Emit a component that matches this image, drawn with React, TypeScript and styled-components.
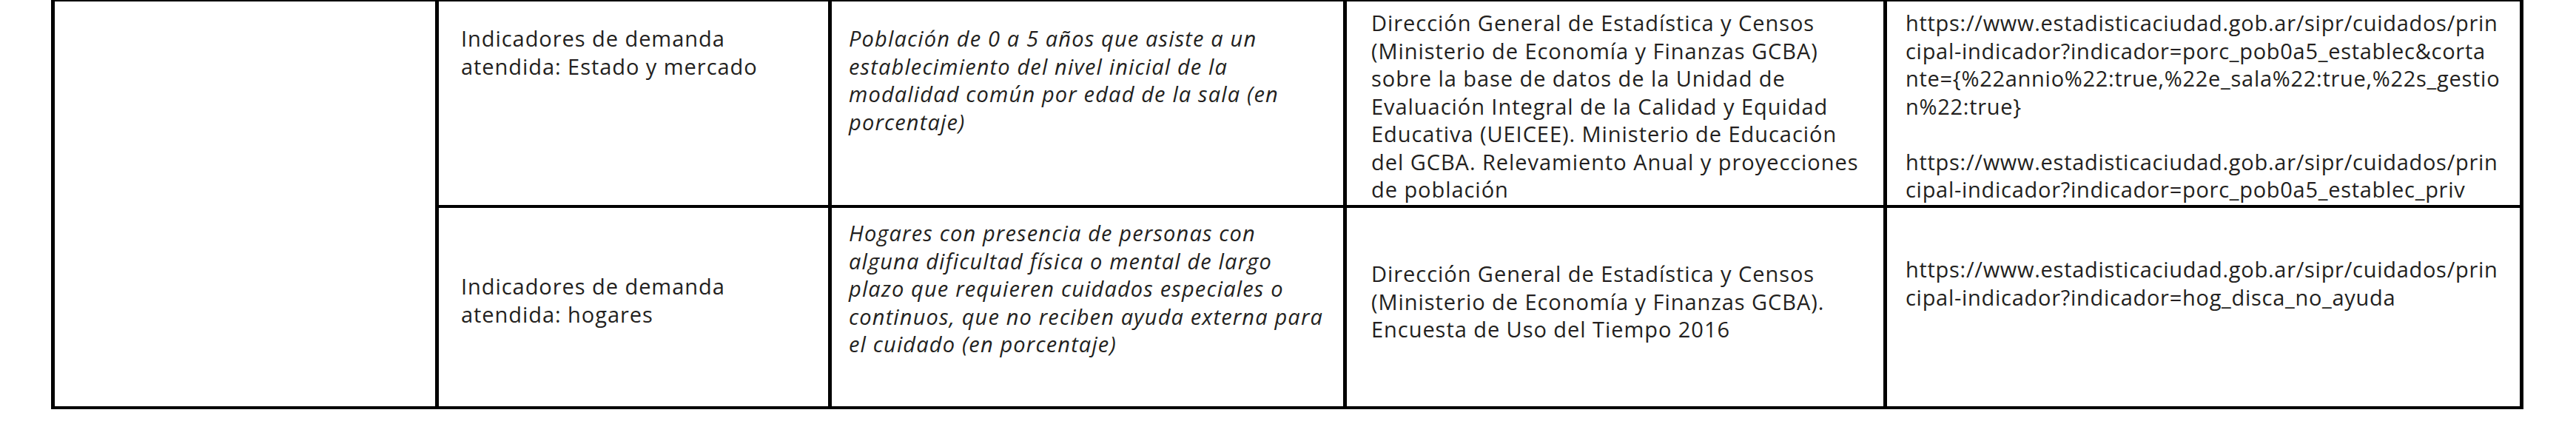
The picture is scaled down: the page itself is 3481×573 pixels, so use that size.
import React from "react";
import styled, { createGlobalStyle } from "styled-components";

const GlobalStyle = createGlobalStyle`
    html,
    body {
        margin: 0;
        padding: 0;
        background: #fff;
    }

    body {
        width: 3481px;
        height: 573px;
        overflow: hidden;
    }
`;

const Table = styled.table`
    margin: -2px 0 0 69px;
    width: 3341px;
    table-layout: fixed;
    border-collapse: separate;
    border-spacing: 0;
    border-top: 4px solid #000;
    border-left: 5px solid #000;
    font-family: "Open Sans", "Liberation Sans", sans-serif;
    font-size: 29px;
    line-height: 37.5px;
    color: #231f20;
`;

const Row = styled.tr<{ $height: number }>`
    height: ${({ $height }) => $height}px;
`;

const Cell = styled.td<{ $top?: number; $left?: number; $italic?: boolean; $tracking?: number }>`
    padding: ${({ $top = 0 }) => $top}px 0 0 ${({ $left = 0 }) => $left}px;
    vertical-align: top;
    border-right: 5px solid #000;
    border-bottom: 4px solid #000;
    font-style: ${({ $italic }) => ($italic ? "italic" : "normal")};
    letter-spacing: ${({ $tracking = 0 }) => $tracking}px;
    overflow: hidden;
`;

const Line = styled.span`
    display: block;
    white-space: pre;
`;

interface Entry {
    height: number;
    indicator: string[];
    description: string[];
    source: string[];
    links: string[];
    offsets: [number, number, number, number];
}

const COLUMNS = [519, 531, 696, 730, 860];
const INSETS = [30, 23, 33, 25];

const ENTRIES: Entry[] = [
    {
        height: 279,
        indicator: ["Indicadores de demanda", "atendida: Estado y mercado"],
        description: [
            "Población de 0 a 5 años que asiste a un",
            "establecimiento del nivel inicial de la",
            "modalidad común por edad de la sala (en",
            "porcentaje)",
        ],
        source: [
            "Dirección General de Estadística y Censos",
            "(Ministerio de Economía y Finanzas GCBA)",
            "sobre la base de datos de la Unidad de",
            "Evaluación Integral de la Calidad y Equidad",
            "Educativa (UEICEE). Ministerio de Educación",
            "del GCBA. Relevamiento Anual y proyecciones",
            "de población",
        ],
        links: [
            "https://www.estadisticaciudad.gob.ar/sipr/cuidados/prin",
            "cipal-indicador?indicador=porc_pob0a5_establec&corta",
            "nte={%22annio%22:true,%22e_sala%22:true,%22s_gestio",
            "n%22:true}",
            " ",
            "https://www.estadisticaciudad.gob.ar/sipr/cuidados/prin",
            "cipal-indicador?indicador=porc_pob0a5_establec_priv",
        ],
        offsets: [31, 31, 10, 10],
    },
    {
        height: 272,
        indicator: ["Indicadores de demanda", "atendida: hogares"],
        description: [
            "Hogares con presencia de personas con",
            "alguna dificultad física o mental de largo",
            "plazo que requieren cuidados especiales o",
            "continuos, que no reciben ayuda externa para",
            "el cuidado (en porcentaje)",
        ],
        source: [
            "Dirección General de Estadística y Censos",
            "(Ministerio de Economía y Finanzas GCBA).",
            "Encuesta de Uso del Tiempo 2016",
        ],
        links: [
            "https://www.estadisticaciudad.gob.ar/sipr/cuidados/prin",
            "cipal-indicador?indicador=hog_disca_no_ayuda",
        ],
        offsets: [87, 15, 70, 64],
    },
];

const Lines = ({ lines }: { lines: string[] }): JSX.Element => (
    <>
        {lines.map((line, i) => (
            <Line key={i}>{line}</Line>
        ))}
    </>
);

const App = (): JSX.Element => (
    <>
        <GlobalStyle />
        <Table>
            <colgroup>
                {COLUMNS.map((w, i) => (
                    <col key={i} style={{ width: w }} />
                ))}
            </colgroup>
            <tbody>
                {ENTRIES.map((entry, i) => {
                    const [a, b, c, d] = entry.offsets;
                    return (
                        <Row key={i} $height={entry.height}>
                            {i === 0 && <Cell rowSpan={ENTRIES.length} />}
                            <Cell $top={a} $left={INSETS[0]} $tracking={0.95}>
                                <Lines lines={entry.indicator} />
                            </Cell>
                            <Cell $top={b} $left={INSETS[1]} $tracking={1.15} $italic>
                                <Lines lines={entry.description} />
                            </Cell>
                            <Cell $top={c} $left={INSETS[2]} $tracking={0.95}>
                                <Lines lines={entry.source} />
                            </Cell>
                            <Cell $top={d} $left={INSETS[3]} $tracking={0.72}>
                                <Lines lines={entry.links} />
                            </Cell>
                        </Row>
                    );
                })}
            </tbody>
        </Table>
    </>
);

export default App;
